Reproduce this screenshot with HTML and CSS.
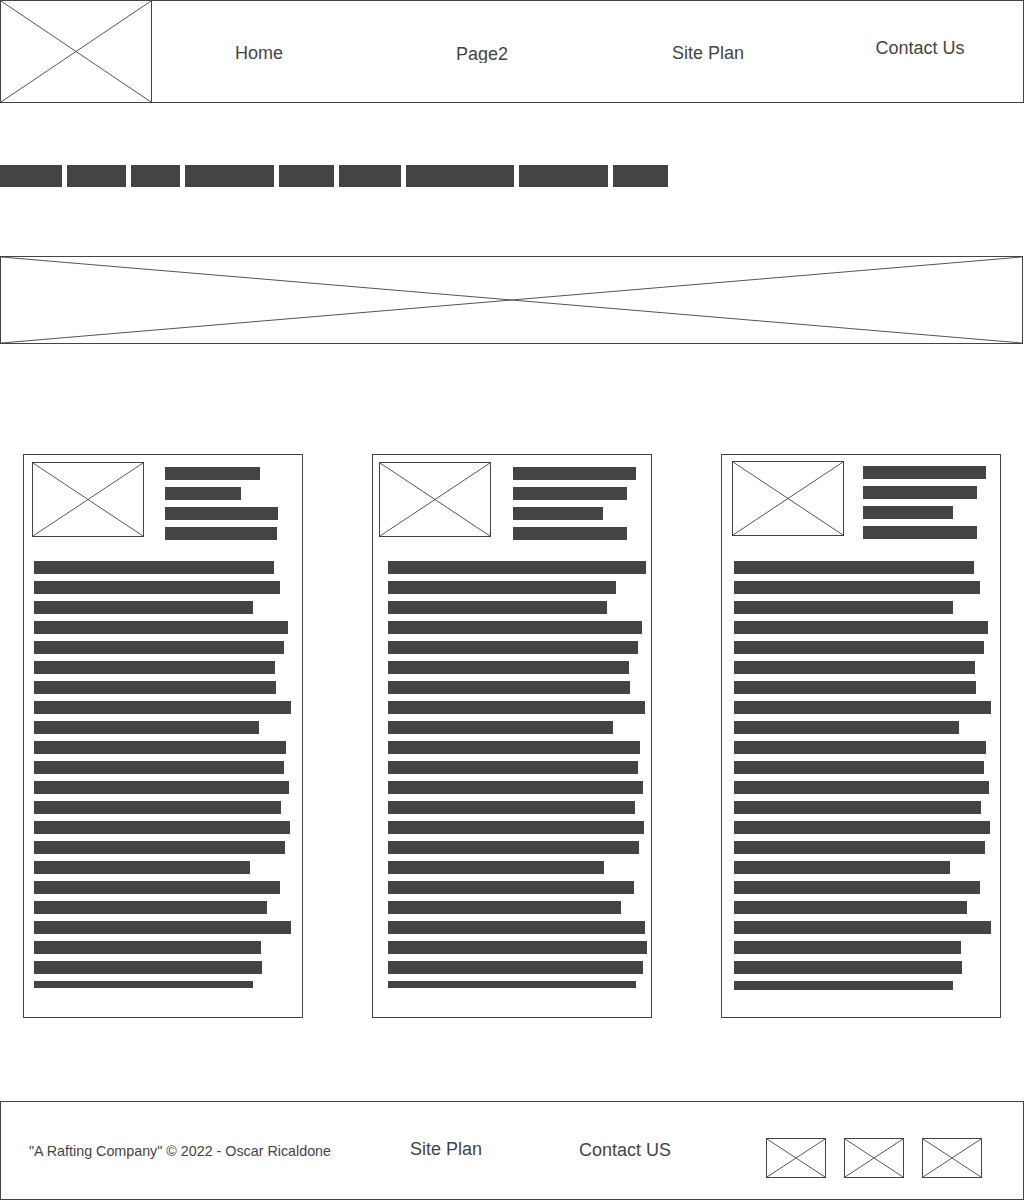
FILE: index.html
```html
<!DOCTYPE html>
<html lang="en">
<head>
  <meta charset="UTF-8" />
  <meta name="viewport" content="width=device-width, initial-scale=1.0" />
  <title>A Rafting Company</title>
  <link rel="stylesheet" href="styles.css">
</head>
<body>
  <!-- header -->
  <header class="header">
    <div class="logo">
      <svg class="ph" viewBox="0 0 100 100" preserveAspectRatio="none"><path d="M0 0L100 100M100 0L0 100" /></svg>
    </div>
    <nav class="nav">
      <a class="nav-item nav-home" href="#">Home</a>
      <a class="nav-item nav-page2" href="#"><span class="clip">Page2</span></a>
      <a class="nav-item nav-plan" href="#">Site Plan</a>
      <a class="nav-item nav-contact" href="#">Contact Us</a>
    </nav>
  </header>

  <!-- breadcrumb / menu bars -->
  <div class="menu">
    <span class="blk" style="width:62px"></span>
    <span class="blk" style="width:59px"></span>
    <span class="blk" style="width:49px"></span>
    <span class="blk" style="width:89px"></span>
    <span class="blk" style="width:55px"></span>
    <span class="blk" style="width:62px"></span>
    <span class="blk" style="width:108px"></span>
    <span class="blk" style="width:89px"></span>
    <span class="blk" style="width:55px"></span>
  </div>

  <!-- banner -->
  <div class="banner">
    <svg class="ph" viewBox="0 0 100 100" preserveAspectRatio="none"><path d="M0 0L100 100M100 0L0 100" /></svg>
  </div>

  <!-- cards -->
  <main class="cards">
    <article class="card">
      <div class="card-top">
        <div class="thumb"><svg class="ph" viewBox="0 0 100 100" preserveAspectRatio="none"><path d="M0 0L100 100M100 0L0 100" /></svg></div>
        <div class="lines">
          <span class="bar" style="width:95px"></span>
          <span class="bar" style="width:76px"></span>
          <span class="bar" style="width:113px"></span>
          <span class="bar" style="width:112px"></span>
        </div>
      </div>
      <div class="card-body" data-w="240,246,219,254,250,241,242,257,225,252,250,255,247,256,251,216,246,233,257,227,228,219"></div>
    </article>

    <article class="card card--mid">
      <div class="card-top">
        <div class="thumb"><svg class="ph" viewBox="0 0 100 100" preserveAspectRatio="none"><path d="M0 0L100 100M100 0L0 100" /></svg></div>
        <div class="lines">
          <span class="bar" style="width:123px"></span>
          <span class="bar" style="width:114px"></span>
          <span class="bar" style="width:90px"></span>
          <span class="bar" style="width:114px"></span>
        </div>
      </div>
      <div class="card-body" data-w="258,228,219,254,250,241,242,257,225,252,250,255,247,256,251,216,246,233,257,259,255,248"></div>
    </article>

    <article class="card card--last">
      <div class="card-top">
        <div class="thumb"><svg class="ph" viewBox="0 0 100 100" preserveAspectRatio="none"><path d="M0 0L100 100M100 0L0 100" /></svg></div>
        <div class="lines">
          <span class="bar" style="width:123px"></span>
          <span class="bar" style="width:114px"></span>
          <span class="bar" style="width:90px"></span>
          <span class="bar" style="width:114px"></span>
        </div>
      </div>
      <div class="card-body" data-w="240,246,219,254,250,241,242,257,225,252,250,255,247,256,251,216,246,233,257,227,228,219"></div>
    </article>
  </main>

  <!-- footer -->
  <footer class="footer">
    <span class="copy">"A Rafting Company" © 2022 - Oscar Ricaldone</span>
    <a class="foot-link foot-plan" href="#">Site Plan</a>
    <a class="foot-link foot-contact" href="#">Contact US</a>
    <div class="socials">
      <span class="soc"><svg class="ph" viewBox="0 0 100 100" preserveAspectRatio="none"><path d="M0 0L100 100M100 0L0 100" /></svg></span>
      <span class="soc"><svg class="ph" viewBox="0 0 100 100" preserveAspectRatio="none"><path d="M0 0L100 100M100 0L0 100" /></svg></span>
      <span class="soc"><svg class="ph" viewBox="0 0 100 100" preserveAspectRatio="none"><path d="M0 0L100 100M100 0L0 100" /></svg></span>
    </div>
  </footer>

  <script>
    // fill card text placeholders from the width lists
    document.querySelectorAll('.card-body').forEach(body => {
      body.dataset.w.split(',').forEach(w => {
        const bar = document.createElement('span');
        bar.className = 'bar';
        bar.style.width = w + 'px';
        body.appendChild(bar);
      });
    });
  </script>
</body>
</html>
```

FILE: styles.css
```css
* { margin: 0; padding: 0; box-sizing: border-box; }
html, body { width: 100%; background: #fff; font-family: "Liberation Sans", Arial, sans-serif; color: #444; }
a { color: #444; text-decoration: none; }

/* placeholder cross */
.ph { display: block; width: 100%; height: 100%; }
.ph path { fill: none; stroke: #555; stroke-width: 1; vector-effect: non-scaling-stroke; }

/* header */
.header {
  display: flex; height: 103px; width: 1024px;
  border: 1px solid #444;
}
.logo { width: 151px; border-right: 1px solid #444; }
.nav { display: flex; align-items: center; padding-top: 4px; }
.nav-item { display: block; text-align: center; font-size: 18px; line-height: 21px; }
.nav-home { width: 214px; }
.nav-page2 { width: 232px; }
.nav-plan { width: 220px; }
.nav-contact { width: 204px; padding-bottom: 10px; }
.nav-page2 .clip { display: block; height: 19px; overflow: hidden; }

/* menu blocks */
.menu { display: flex; gap: 5px; margin-top: 62px; height: 22px; }
.blk { display: block; height: 22px; background: #444; }

/* banner */
.banner { width: 1023px; height: 88px; margin-top: 69px; border: 1px solid #444; }

/* cards */
.cards { display: flex; gap: 69px; padding-left: 23px; margin-top: 110px; }
.card {
  width: 280px; height: 564px;
  border: 1px solid #444;
  padding: 7px 0 0 8px;
}
.card-top { display: flex; gap: 21px; height: 75px; }
.thumb { width: 112px; height: 75px; border: 1px solid #444; flex-shrink: 0; }
.lines { display: flex; flex-direction: column; gap: 7px; padding-top: 5px; }
.bar { display: block; height: 13px; background: #444; flex-shrink: 0; }
.card-body {
  display: flex; flex-direction: column; gap: 7px;
  height: 427px; overflow: hidden;
  margin: 24px 0 0 2px;
}

.card--mid { padding-left: 6px; }
.card--mid .card-top { gap: 22px; }
.card--mid .card-body { margin-left: 9px; }

.card--last { padding: 6px 0 0 10px; }
.card--last .card-top { gap: 19px; }
.card--last .card-body { margin: 25px 0 0 2px; height: 429px; }

/* footer */
.footer {
  display: flex; align-items: center;
  width: 1024px; height: 99px; margin-top: 83px;
  border: 1px solid #444;
  padding-left: 28px;
}
.copy { width: 381px; font-size: 14.3px; }
.foot-link { font-size: 18px; }
.foot-plan { width: 169px; margin-top: -2px; }
.foot-contact { width: 187px; }
.socials { display: flex; gap: 18px; margin-top: 14px; }
.soc { display: block; width: 60px; height: 40px; border: 1px solid #444; }
```
